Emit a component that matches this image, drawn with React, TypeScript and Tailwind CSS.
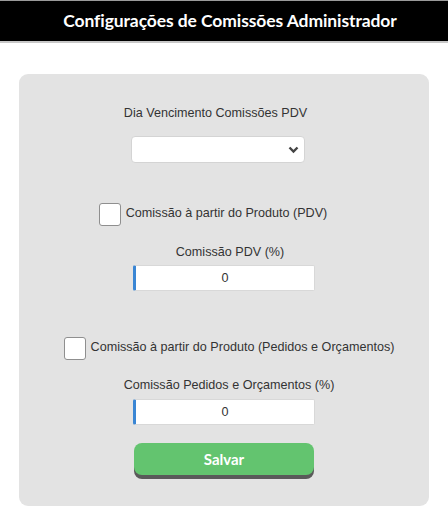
import { useState } from "react";

export default function App() {
  const [pdv, setPdv] = useState(false);
  const [pedidos, setPedidos] = useState(false);

  return (
    <div className="min-h-[513px] bg-white font-['Liberation_Sans',Arial,sans-serif] text-[#333]">
      <header className="h-[43px] bg-black border-t border-t-[#9a9a9a] border-b-2 border-b-[#c8c8c8] flex items-center justify-center">
        <h1 className="font-['Lato',sans-serif] font-bold text-[17.5px] text-white ml-[12px] tracking-[-0.1px]">
          Configurações de Comissões Administrador
        </h1>
      </header>

      <div className="mx-[19px] mt-[31px] bg-[#e3e3e3] rounded-[9px] pt-[29px] pb-[27px] flex flex-col items-center text-[12.6px] leading-5">
        <label className="mr-[17px]">Dia Vencimento Comissões PDV</label>

        <div className="relative mt-[13px] mr-[12px] w-[174px] h-[27px] bg-white border border-[#d4d4d4] rounded-[4px]">
          <svg className="absolute right-[5px] top-[9px]" width="11" height="8" viewBox="0 0 11 8">
            <path d="M1.5 1.5 5.5 5.5 9.5 1.5" fill="none" stroke="#444" strokeWidth="2.4" />
          </svg>
        </div>

        <div className="mt-[40px] mr-[22px] flex items-start gap-[5px]">
          <button
            onClick={() => setPdv(!pdv)}
            className="w-[22px] h-[23px] bg-white border border-[#8f8f8f] rounded-[3px]"
          />
          <span>Comissão à partir do Produto (PDV)</span>
        </div>

        <label className="mt-[16px] ml-[12px]">Comissão PDV (%)</label>
        <div className="mt-[3px] w-[182px] h-[26px] bg-white border border-[#d8d8d8] border-l-[3px] border-l-[#3a86d4] rounded-[2px] flex items-center justify-center">
          0
        </div>

        <div className="mt-[46px] ml-[10px] flex items-start gap-[5px]">
          <button
            onClick={() => setPedidos(!pedidos)}
            className="w-[22px] h-[23px] bg-white border border-[#8f8f8f] rounded-[3px]"
          />
          <span>Comissão à partir do Produto (Pedidos e Orçamentos)</span>
        </div>

        <label className="mt-[15px] ml-[10px]">Comissão Pedidos e Orçamentos (%)</label>
        <div className="mt-[4px] w-[182px] h-[26px] bg-white border border-[#d8d8d8] border-l-[3px] border-l-[#3a86d4] rounded-[2px] flex items-center justify-center">
          0
        </div>

        <button className="mt-[18px] w-[180px] h-[32px] bg-[#63c46f] rounded-[8px] shadow-[0_4px_0_#5a5a5a] text-white font-['Lato',sans-serif] font-bold text-[15px] mb-[4px]">
          Salvar
        </button>
      </div>
    </div>
  );
}
